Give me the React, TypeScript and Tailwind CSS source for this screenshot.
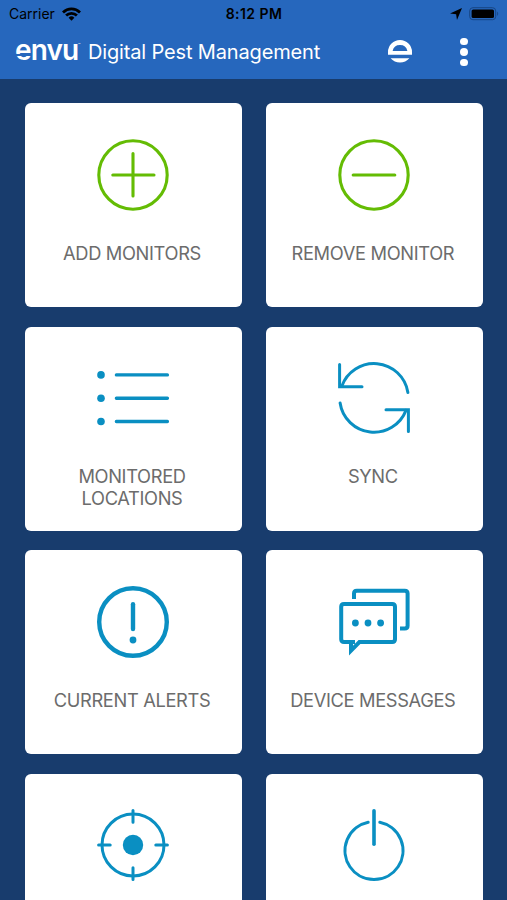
import type { ReactNode } from 'react';

const GREEN = '#64bc04';
const BLUE = '#0a8fc2';

interface TileProps {
  label?: string;
  children: ReactNode;
}

function Tile({ label, children }: TileProps) {
  return (
    <button className="flex h-[204px] flex-col items-center rounded-md bg-white pt-[35.5px] pr-px">
      {children}
      {label && (
        <span className="mt-[32px] mr-[2px] w-[180px] text-[18.3px] leading-[21.5px] tracking-[-0.35px] text-[#6c6c6c]">
          {label}
        </span>
      )}
    </button>
  );
}

function Icon({ color, width, children }: { color: string; width: number; children: ReactNode }) {
  return (
    <svg
      className="h-[72px] w-[72px] shrink-0 overflow-visible"
      viewBox="0 0 72 72"
      fill="none"
      stroke={color}
      strokeWidth={width}
      strokeLinecap="round"
    >
      {children}
    </svg>
  );
}

function StatusBar() {
  return (
    <div className="grid h-[27px] grid-cols-3 items-center pr-[7px] pl-[9px] text-black">
      <div className="flex items-center gap-[7px]">
        <span className="text-[14px]">Carrier</span>
        <svg className="h-[14px] w-[19px]" viewBox="0 0 19 14" fill="none" stroke="currentColor" strokeWidth="2.8">
          <path d="M1 5.4a12.2 12.2 0 0 1 17 0" />
          <path d="M4.1 8.6a7.7 7.7 0 0 1 10.8 0" />
          <path d="M9.5 13.7 6.6 10.8a4.1 4.1 0 0 1 5.8 0z" fill="currentColor" stroke="none" />
        </svg>
      </div>
      <span className="-ml-[1px] text-center text-[14px] font-semibold tracking-[0.45px]">8:12 PM</span>
      <div className="flex items-center justify-end gap-[7px]">
        <svg className="h-[12px] w-[12px]" viewBox="0 0 11 11" fill="currentColor">
          <path d="M11 0 6.4 11 5.6 5.8 0 5z" />
        </svg>
        <svg className="h-[14px] w-[31px]" viewBox="0 0 31 14">
          <rect x="0.7" y="0.7" width="26" height="12" rx="3.2" fill="none" stroke="#174583" />
          <rect x="2.6" y="2.5" width="22.4" height="8.6" rx="1.6" />
          <path d="M28.2 4.6q2 2.2 0 4.4z" fill="#174583" />
        </svg>
      </div>
    </div>
  );
}

function Header() {
  return (
    <header className="h-[79px] bg-[#2667bd]">
      <StatusBar />
      <div className="flex h-[50px] items-center pl-[15px] text-white">
        <div className="relative w-[66px] text-[28px] leading-none font-semibold tracking-[-0.9px]">
          <span className="relative -top-[2px]">envu</span>
          {/* gap under the crossbar of the e */}
          <span className="absolute top-[16px] left-0 h-[1.5px] w-[15.5px] bg-[#2667bd]" />
          <span className="absolute top-[5px] left-[63px] text-[4px] leading-none font-normal tracking-normal">™</span>
        </div>
        <h1 className="w-[307px] pl-[7px] text-[20px] tracking-[-0.15px] whitespace-nowrap">Digital Pest Management</h1>
        <svg className="h-[24px] w-[24px]" viewBox="0 0 24 24" fill="#fff">
          <path fillRule="evenodd" d="M0 14.7V12a12 12 0 0 1 24 0v2.7zM4.6 10.9h14.8a7.6 7.6 0 0 0-14.8 0z" />
          <path d="M2.6 18.2h18.8a12.4 12.4 0 0 1-18.8 0z" />
        </svg>
        <div className="ml-[48px] flex flex-col gap-[2.8px]">
          <span className="h-[7.5px] w-[7.5px] rounded-full bg-white" />
          <span className="h-[7.5px] w-[7.5px] rounded-full bg-white" />
          <span className="h-[7.5px] w-[7.5px] rounded-full bg-white" />
        </div>
      </div>
    </header>
  );
}

export default function App() {
  return (
    <div className="h-[900px] w-[507px] overflow-hidden bg-[#183c6d] font-['Inter','Liberation_Sans',sans-serif]">
      <Header />
      <main className="grid grid-cols-2 gap-x-[24.4px] gap-y-[19.5px] pt-[24.3px] pr-[24.4px] pl-[25.3px]">
        <Tile label="ADD MONITORS">
          <Icon color={GREEN} width={3.1}>
            <circle cx="36" cy="36" r="34.2" />
            <path d="M36 14.6v42.4M15.8 36h41.2" />
          </Icon>
        </Tile>
        <Tile label="REMOVE MONITOR">
          <Icon color={GREEN} width={3.1}>
            <circle cx="36" cy="36" r="34.2" />
            <path d="M15.2 36h41.6" />
          </Icon>
        </Tile>

        <Tile label="MONITORED LOCATIONS">
          <Icon color={BLUE} width={3.4}>
            <path d="M19.4 12.9h51M19.4 36.2h51M19.4 59.5h51" />
            <g fill={BLUE} stroke="none">
              <circle cx="4" cy="12.9" r="3.8" />
              <circle cx="4" cy="36.2" r="3.8" />
              <circle cx="4" cy="59.5" r="3.8" />
            </g>
          </Icon>
        </Tile>
        <Tile label="SYNC">
          <Icon color={BLUE} width={3}>
            <path d="M1.6 2.4v22.4h22.4" />
            <path d="M3.7 24.4a34.3 34.3 0 0 1 66.2 6" />
            <path d="M70.4 69.6V47.8H48" />
            <path d="M68 48.4A34.3 34.3 0 0 1 2.1 41" />
          </Icon>
        </Tile>

        <Tile label="CURRENT ALERTS">
          <Icon color={BLUE} width={4.4}>
            <circle cx="36" cy="36" r="33.8" />
            <path d="M36 18.2v24.8" />
            <circle cx="36" cy="54" r="3.4" fill={BLUE} stroke="none" />
          </Icon>
        </Tile>
        <Tile label="DEVICE MESSAGES">
          <Icon color={BLUE} width={4}>
            <g strokeLinecap="butt">
              <path d="M16 13V7.6q0-2.8 2.8-2.8h48q2.8 0 2.8 2.8v32.2q0 2.8-2.8 2.8H62" />
              <path d="M17 56H6q-2.8 0-2.8-2.8V20.8Q3.2 18 6 18h48.2q2.8 0 2.8 2.8v32.4q0 2.8-2.8 2.8H21.4L13 64.6V56" />
            </g>
            <g fill={BLUE} stroke="none">
              <circle cx="17.4" cy="37" r="3.4" />
              <circle cx="30" cy="37" r="3.4" />
              <circle cx="42.6" cy="37" r="3.4" />
            </g>
          </Icon>
        </Tile>

        <Tile>
          <Icon color={BLUE} width={3}>
            <circle cx="36" cy="36" r="31" />
            <path d="M36 1.6v11.6M36 58.8v11.6M1.6 36h11.6M58.8 36h11.6" />
            <circle cx="36" cy="36" r="10.2" fill={BLUE} stroke="none" />
          </Icon>
        </Tile>
        <Tile>
          <Icon color={BLUE} width={3}>
            <path d="M30.2 13.2a29 29 0 1 0 11.6 0" />
            <path d="M36 1.8v33.4" strokeWidth="3.6" />
          </Icon>
        </Tile>
      </main>
    </div>
  );
}
